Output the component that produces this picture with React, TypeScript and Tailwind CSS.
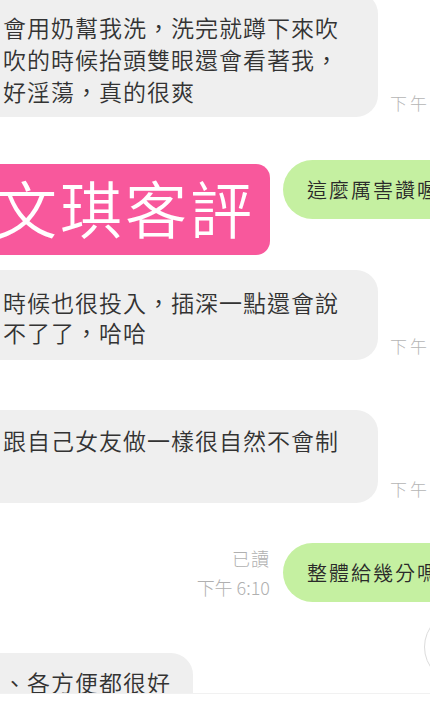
const FONT = "font-['Noto_Sans_CJK_TC','Noto_Sans_CJK_SC',sans-serif]";

// ─── Pieces ───────────────────────────────────────────────

function TimeStamp({ text }: { text: string }) {
  return (
    <span className="mb-[4px] ml-[12px] shrink-0 whitespace-nowrap text-[17px] leading-[20px] font-light tracking-[3px] text-[#b5b5b5]">
      {text}
    </span>
  );
}

interface BubbleProps {
  lines: string[];
  className: string;
}

function LeftBubble({ lines, className }: BubbleProps) {
  return (
    <div
      className={`-ml-[30px] shrink-0 rounded-[22px] bg-[#efefef] pl-[33px] text-[23px] font-[350] tracking-[1px] text-[#333333] ${className}`}
    >
      {lines.map((l, i) => (
        <div key={i} className="whitespace-nowrap">
          {l}
        </div>
      ))}
    </div>
  );
}

function RightBubble({ text }: { text: string }) {
  return (
    <div className="ml-[13px] flex h-[59px] w-[200px] shrink-0 items-center rounded-full bg-[#c5f0a1] pl-[24px] text-[20px] font-[350] tracking-[2px] whitespace-nowrap text-[#2a2a2a]">
      {text}
    </div>
  );
}

// ─── Page ─────────────────────────────────────────────────

export default function App() {
  return (
    <div className={`relative h-[717px] w-[430px] overflow-hidden bg-white ${FONT}`}>
      {/* first review message */}
      <div className="-mt-[8px] flex items-end">
        <LeftBubble
          className="w-[408px] pt-[19px] pb-[10px] leading-[32px]"
          lines={['會用奶幫我洗，洗完就蹲下來吹', '吹的時候抬頭雙眼還會看著我，', '好淫蕩，真的很爽']}
        />
        <TimeStamp text="下午" />
      </div>

      {/* pink title + reply */}
      <div className="mt-[43px] flex h-[95px] items-start">
        <div className="mt-[4px] -ml-[20px] flex h-[91px] w-[290px] shrink-0 items-center rounded-[14px] bg-[#f8589c] pb-[6px] pl-[15px] text-[62px] leading-none font-[350] tracking-[3px] whitespace-nowrap text-white">
          文琪客評
        </div>
        <RightBubble text="這麼厲害讚喔" />
      </div>

      <div className="mt-[15px] flex items-end">
        <LeftBubble
          className="w-[408px] pt-[17px] pb-[13px] leading-[30px]"
          lines={['時候也很投入，插深一點還會說', '不了了，哈哈']}
        />
        <TimeStamp text="下午" />
      </div>

      <div className="mt-[50px] flex items-end">
        <LeftBubble
          className="w-[408px] pt-[15px] pb-[48px] leading-[30px]"
          lines={['跟自己女友做一樣很自然不會制']}
        />
        <TimeStamp text="下午" />
      </div>

      {/* read receipt + question */}
      <div className="mt-[40px] flex items-center">
        <div className="w-[270px] shrink-0 text-right text-[18px] leading-[29px] font-light text-[#b0b0b0]">
          <div className="tracking-[1px]">已讀</div>
          <div>下午 6:10</div>
        </div>
        <RightBubble text="整體給幾分嗎" />
      </div>

      {/* last message, cut off at the bottom */}
      <div className="mt-[51px] h-[40px] overflow-hidden">
        <LeftBubble className="w-[223px] pt-[14px] pb-[16px] leading-[30px]" lines={['、各方便都很好']} />
      </div>
      <div className="border-t border-[#f1f1f1]" />

      {/* edge of a round button peeking in from the right */}
      <div className="absolute top-[611px] left-[424px] h-[72px] w-[72px] rounded-full border border-[#dcdcdc]" />
    </div>
  );
}
